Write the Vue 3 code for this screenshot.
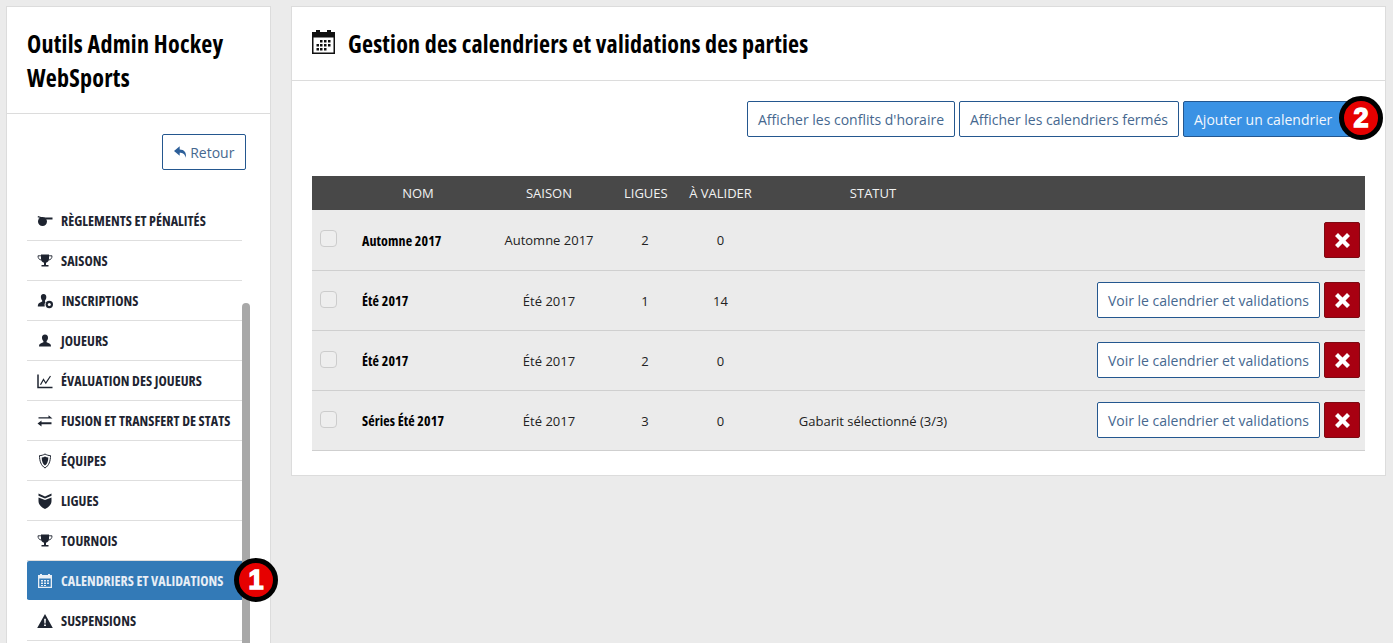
<script setup>
const menu = [
  { label: 'Règlements et pénalités', icon: 'hand' },
  { label: 'Saisons', icon: 'trophy' },
  { label: 'Inscriptions', icon: 'useradd', wide: true },
  { label: 'Joueurs', icon: 'user' },
  { label: 'Évaluation des joueurs', icon: 'chart' },
  { label: 'Fusion et transfert de stats', icon: 'swap' },
  { label: 'Équipes', icon: 'shield' },
  { label: 'Ligues', icon: 'league' },
  { label: 'Tournois', icon: 'trophy' },
  { label: 'Calendriers et validations', icon: 'calendar', active: true },
  { label: 'Suspensions', icon: 'warning' },
]
const rows = [
  { nom: 'Automne 2017', saison: 'Automne 2017', ligues: 2, valider: 0, statut: '', voir: false },
  { nom: 'Été 2017', saison: 'Été 2017', ligues: 1, valider: 14, statut: '', voir: true },
  { nom: 'Été 2017', saison: 'Été 2017', ligues: 2, valider: 0, statut: '', voir: true },
  { nom: 'Séries Été 2017', saison: 'Été 2017', ligues: 3, valider: 0, statut: 'Gabarit sélectionné (3/3)', voir: true },
]
</script>

<template>
  <div class="page">
    <aside class="sidebar">
      <div class="brand">Outils Admin Hockey WebSports</div>
      <div class="back-row">
        <button class="btn back">
          <svg class="back-icon" viewBox="0 0 16 14"><path d="M7 0 0 5.800l7 5.800V8c3.600 0 6 1 7.600 6 1-6.500-2-10.200-7.600-10.200z" fill="currentColor"/></svg>
          Retour
        </button>
      </div>
      <nav class="menu">
        <a v-for="m in menu" :key="m.label" class="item" :class="{ active: m.active }">
          <svg class="micon" viewBox="0 0 16 16" fill="currentColor">
            <template v-if="m.icon === 'hand'">
              <circle cx="5.500" cy="8.500" r="4.500"/>
              <path d="M7 4.600h8.500v1.900H9.500z"/>
              <path d="M.8 3.600 5.500 5" fill="none" stroke="currentColor" stroke-width="1.300"/>
            </template>
            <template v-else-if="m.icon === 'trophy'">
              <path d="M4 1.500h8v4.500c0 2-1.500 3.500-3 3.800V12h2.500v1.500h-7V12H7V9.800C5.500 9.500 4 8 4 6z"/>
              <path d="M4 2.800H1c0 2.600 1.200 3.900 3.200 4.200M12 2.800h3c0 2.600-1.200 3.900-3.200 4.200" fill="none" stroke="currentColor" stroke-width=".9"/>
            </template>
            <template v-else-if="m.icon === 'useradd'">
              <path d="M6.500 1c2 0 3 1.500 2.800 3.500-.1 1.200-.7 2.300-1.300 3v1.200l.6.400a4.600 4.600 0 0 0-.9 4.400H.8c0-2.600.9-3.300 2.400-4l2-.9V7.500c-.7-.8-1.200-1.800-1.300-3C3.700 2.500 4.600 1 6.500 1z"/>
              <circle cx="12.300" cy="11.500" r="3.700"/>
              <circle cx="12.300" cy="11.500" r="1.500" fill="#fff"/>
            </template>
            <template v-else-if="m.icon === 'user'">
              <path d="M8 1.500c2 0 3.200 1.500 3 3.500-.1 1.300-.7 2.400-1.400 3.100v1.200l2.300 1c1.300.6 2.100 1.200 2.100 3.200H2c0-2 .8-2.600 2.100-3.200l2.300-1V8.100C5.700 7.400 5.100 6.300 5 5c-.2-2 1-3.500 3-3.500z"/>
            </template>
            <template v-else-if="m.icon === 'chart'">
              <path d="M1 1.500V14.500H15.500" fill="none" stroke="currentColor" stroke-width="1.500"/>
              <path d="M3.500 11.800 6.500 6.500l2.300 3.700 4.700-7.200" fill="none" stroke="currentColor" stroke-width="1.200"/>
            </template>
            <template v-else-if="m.icon === 'swap'">
              <path d="M1.500 4.300h10V2.300L15.500 5.400l-4 0H1.500zM14.500 9.300h-10V7.400L.5 10.400l4 3.100v-2.200h10z"/>
            </template>
            <template v-else-if="m.icon === 'shield'">
              <path d="M8 1c1.800 1.100 3.600 1.600 5.500 1.600 0 5.500-1.600 10-5.500 12.400C4.100 12.600 2.500 8.100 2.500 2.600 4.400 2.600 6.200 2.100 8 1z" fill="none" stroke="currentColor" stroke-width="1"/>
              <path d="M8 3.400c1.100.6 2.200 1 3.300 1.100 0 3.500-1 6.500-3.300 8.100-2.300-1.600-3.300-4.600-3.300-8.100C5.800 4.400 6.900 4 8 3.400z"/>
            </template>
            <template v-else-if="m.icon === 'league'">
              <path d="M1.500 4.500 8 7l6.500-2.500V8c0 3.500-2.500 6-6.500 8-4-2-6.500-4.500-6.500-8z"/>
              <path d="M1.500.5 8 3.500l6.500-3v2.200L8 5.400 1.500 2.700z"/>
            </template>
            <template v-else-if="m.icon === 'calendar'">
              <path fill-rule="evenodd" d="M1 2h2V1h2v1h6V1h2v1h2v13H1zM2.300 5.500v8.200h11.400V5.500z"/>
              <path d="M4 7h2v1.500H4zM7 7h2v1.500H7zM10 7h2v1.500h-2zM4 9.500h2V11H4zM7 9.500h2V11H7zM10 9.500h2V11h-2zM4 12h2v1H4zM7 12h2v1H7z"/>
            </template>
            <template v-else>
              <path fill-rule="evenodd" d="M8 1 15.800 15H.2zM7.100 5.800l.3 4.700h1.200l.3-4.700zM7.100 11.400v1.600h1.800v-1.600z"/>
            </template>
          </svg>
          <span class="mlabel" :class="{ wide: m.wide }">{{ m.label }}</span>
        </a>
      </nav>
      <div class="thumb"></div>
      <span class="marker marker-one">1</span>
    </aside>

    <main class="panel">
      <header class="panel-head">
        <svg class="head-icon" viewBox="0 0 23 24" fill="currentColor">
          <path fill-rule="evenodd" d="M0 2h4V0h4v2h7V0h4v2h4v22H0zM1.500 7.500v15h20v-15z"/>
          <path d="M8 10h2.500v2.500H8zM12 10h2.500v2.500H12zM16 10h2.500v2.500H16zM4.500 14H7v2.500H4.500zM8 14h2.500v2.500H8zM12 14h2.500v2.500H12zM16 14h2.500v2.500H16zM4.500 18H7v2.500H4.500zM8 18h2.500v2.500H8zM12 18h2.500v2.500H12z"/>
        </svg>
        <h1>Gestion des calendriers et validations des parties</h1>
      </header>
      <div class="panel-body">
        <div class="actions">
          <button class="btn">Afficher les conflits d'horaire</button>
          <button class="btn">Afficher les calendriers fermés</button>
          <div class="add-wrap">
            <button class="btn primary">Ajouter un calendrier</button>
            <span class="marker marker-two">2</span>
          </div>
        </div>
        <table class="grid">
          <colgroup>
            <col class="c-check" /><col class="c-nom" /><col class="c-saison" /><col class="c-ligues" /><col class="c-valider" /><col class="c-statut" /><col />
          </colgroup>
          <thead>
            <tr>
              <th></th><th>NOM</th><th>SAISON</th><th>LIGUES</th><th>À VALIDER</th><th>STATUT</th><th></th>
            </tr>
          </thead>
          <tbody>
            <tr v-for="(r, i) in rows" :key="i">
              <td><span class="check"></span></td>
              <td class="name">{{ r.nom }}</td>
              <td class="center">{{ r.saison }}</td>
              <td class="center">{{ r.ligues }}</td>
              <td class="center">{{ r.valider }}</td>
              <td class="center">{{ r.statut }}</td>
              <td class="row-actions">
                <button v-if="r.voir" class="btn">Voir le calendrier et validations</button>
                <button class="del" aria-label="Supprimer">
                  <svg viewBox="0 0 14 14" width="15" height="15"><path d="M2.800 0 7 4.200 11.200 0 14 2.800 9.800 7 14 11.200 11.200 14 7 9.800 2.800 14 0 11.200 4.200 7 0 2.800z" fill="#fff"/></svg>
                </button>
              </td>
            </tr>
          </tbody>
        </table>
      </div>
    </main>
  </div>
</template>

<style>
html, body { margin: 0; background: #ebebeb; overflow: hidden; }
</style>

<style scoped>
.page {
  display: flex;
  align-items: flex-start;
  gap: 20px;
  padding: 6px 7px 0 6px;
  height: 637px;
  overflow: hidden;
  font-family: "Open Sans", sans-serif;
  font-size: 13px;
  color: #222;
}
.sidebar {
  position: relative;
  flex: 0 0 265px;
  box-sizing: border-box;
  height: 700px;
  background: #fff;
  border: 1px solid #dcdcdc;
}
.brand {
  box-sizing: border-box;
  height: 107px;
  padding: 20px 20px 0;
  border-bottom: 1px solid #dcdcdc;
  font-size: 24px;
  font-weight: 700;
  font-stretch: 75%;
  letter-spacing: .25px;
  line-height: 34px;
  color: #000;
}
.back-row {
  display: flex;
  justify-content: flex-end;
  padding: 20px 24px 0 0;
  height: 87px;
  box-sizing: border-box;
}
.btn {
  box-sizing: border-box;
  height: 36px;
  padding: 0 10px;
  background: #fff;
  border: 1px solid #24578f;
  border-radius: 2px;
  font: 14px "Open Sans", sans-serif;
  color: #46688f;
  white-space: nowrap;
}
.back { width: 84px; padding: 0; }
.back-icon { width: 13px; height: 12px; color: #2d5f99; }
.menu {
  display: flex;
  flex-direction: column;
  padding: 0 28px 0 20px;
}
.item {
  box-sizing: border-box;
  display: flex;
  align-items: center;
  height: 40px;
  padding-left: 10px;
  border-bottom: 1px solid #dedede;
  color: #1e2430;
}
.item.active {
  background: #337ab7;
  background-clip: padding-box;
  color: #e8eef5;
  border-radius: 2px;
  border-bottom-color: #fff;
  margin-right: -2px;
}
.micon { width: 16px; height: 16px; flex: none; margin-right: 8px; }
.mlabel {
  font-size: 14px;
  font-weight: 700;
  font-stretch: 75%;
  letter-spacing: .04px;
  text-transform: uppercase;
  white-space: nowrap;
}
.mlabel.wide { margin-left: 1px; }
.thumb {
  position: absolute;
  left: 235px;
  top: 296px;
  width: 8px;
  height: 400px;
  border-radius: 4px 4px 0 0;
  background: #a8a8a8;
}
.marker {
  position: absolute;
  box-sizing: border-box;
  display: flex;
  align-items: center;
  justify-content: center;
  width: 44px;
  height: 44px;
  border: 5px solid #000;
  border-radius: 50%;
  background: #e60000;
  color: #fff;
  font: 700 27px "Liberation Sans", sans-serif;
  -webkit-text-stroke: 1.5px #fff;
}
.marker-one { left: 227px; top: 551px; }
.marker-two { right: -31px; top: -5px; }
.panel {
  flex: 1;
  box-sizing: border-box;
  height: 470px;
  background: #fff;
  border: 1px solid #dcdcdc;
}
.panel-head {
  box-sizing: border-box;
  display: flex;
  align-items: center;
  height: 74px;
  padding: 0 0 0 20px;
  border-bottom: 1px solid #dcdcdc;
  color: #000;
}
.head-icon { width: 23px; height: 24px; margin: -3px 13px 0 0; color: #111; }
h1 {
  margin: 0;
  font-size: 24px;
  font-weight: 700;
  font-stretch: 75%;
  letter-spacing: .19px;
}
.panel-body { padding: 20px 20px 0; }
.actions {
  display: flex;
  justify-content: flex-end;
  gap: 4px;
  padding-right: 13px;
}
.add-wrap { position: relative; }
.primary {
  background: #3a92e4;
  color: #f2f7fd;
  width: 169px;
  text-align: left;
}
.grid {
  width: 1053px;
  margin-top: 39px;
  border-collapse: collapse;
  table-layout: fixed;
}
.c-check { width: 50px; }
.c-nom { width: 112px; }
.c-saison { width: 150px; }
.c-ligues { width: 42px; }
.c-valider { width: 109px; }
.c-statut { width: 196px; }
th {
  height: 34px;
  padding: 0;
  background: #484848;
  color: #f2f2f2;
  font-size: 13px;
  font-weight: 400;
  white-space: nowrap;
}
td {
  height: 59px;
  padding: 0;
  background: #ebebeb;
  border-bottom: 1px solid #cfcfcf;
  white-space: nowrap;
}
tbody tr:first-child td { height: 60px; }
.name { font-size: 14px; font-weight: 700; font-stretch: 75%; letter-spacing: .1px; color: #000; }
.center { text-align: center; }
.check {
  display: block;
  box-sizing: border-box;
  width: 17px;
  height: 17px;
  margin: -2px 0 0 8px;
  border: 1px solid #ccc;
  border-radius: 4px;
  background: #eee;
}
tbody tr:first-child .check { margin-top: -4px; }
.row-actions {
  text-align: right;
  padding-right: 5px;
}
tbody tr:not(:first-child) .row-actions { height: 58px; padding-bottom: 1px; }
.row-actions > * { vertical-align: middle; }
.del {
  box-sizing: border-box;
  width: 36px;
  height: 36px;
  margin-left: 4px;
  padding: 0;
  display: inline-flex;
  align-items: center;
  justify-content: center;
  background: #a80011;
  border: 1px solid #7d0a12;
  border-radius: 2px;
}
</style>
